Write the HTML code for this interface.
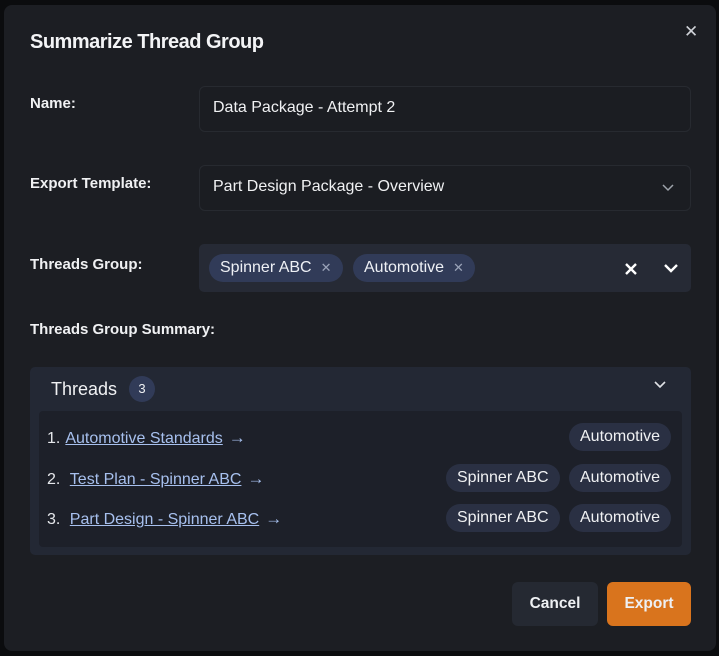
<!DOCTYPE html>
<html><head><style>
*{box-sizing:border-box;margin:0;padding:0}
body{width:719px;height:656px;background:#0b0c0e;font-family:"Liberation Sans",sans-serif;color:#eef0f3;position:relative;overflow:hidden}
.m{position:absolute;left:4px;top:5px;width:712px;height:646px;background:#1c1e23;border-radius:8px}
.a{position:absolute}
h1{position:absolute;left:26px;top:26px;font-size:20px;font-weight:bold;color:#f3f4f6;letter-spacing:-0.5px}
.lbl{position:absolute;left:26px;font-size:15px;font-weight:bold;color:#f0f1f3}
.inp{position:absolute;left:195px;width:492px;height:46px;border:1px solid #272a30;border-radius:6px;background:#1b1d22;font-size:16px;padding:12px 13px;color:#f0f1f3}
.tg{position:absolute;left:195px;top:239px;width:492px;height:48px;background:#262a35;border-radius:5px}
.chip{position:absolute;top:10px;height:28px;border-radius:14px;background:#313b58;font-size:16px;padding:5px 11px;color:#eef0f5}
.chip span{color:#9aa3b8;font-size:13px;margin-left:9px}
.pn{position:absolute;left:26px;top:362px;width:661px;height:188px;background:#232834;border-radius:5px}
.ls{position:absolute;left:9px;top:44px;width:643px;height:136px;background:#1d2029;border-radius:4px}
.row{position:absolute;left:8px;font-size:16px;color:#e6e8ec}
.row a{color:#a7c0ee;text-decoration:underline;margin-left:5px}
.row i{font-style:normal;color:#a7c0ee;margin-left:6px;font-size:17px}
.pill{position:absolute;height:28px;border-radius:14px;background:#2a3043;font-size:16px;padding:5px 11px;color:#f0f1f3}
</style></head><body>
<div class="m">
<h1>Summarize Thread Group</h1>
<div class="a" style="left:680px;top:17px;font-size:17px;color:#cfd2d7">✕</div>
<div class="lbl" style="top:90px">Name:</div>
<div class="inp" style="top:81px">Data Package - Attempt 2</div>
<div class="lbl" style="top:170px">Export Template:</div>
<div class="inp" style="top:160px">Part Design Package - Overview
<svg class="a" style="left:462px;top:18px" width="12" height="8"><path d="M1 1l5 5 5-5" stroke="#9ea3ab" stroke-width="1.5" fill="none"/></svg></div>
<div class="lbl" style="top:251px">Threads Group:</div>
<div class="tg">
<div class="chip" style="left:10px">Spinner ABC<span>✕</span></div>
<div class="chip" style="left:154px">Automotive<span>✕</span></div>
<svg class="a" style="left:426px;top:19px" width="12" height="12"><path d="M1 1l10 10M11 1L1 11" stroke="#fff" stroke-width="2.4"/></svg>
<svg class="a" style="left:465px;top:20px" width="14" height="10"><path d="M1 1l6 6 6-6" stroke="#fff" stroke-width="2.4" fill="none"/></svg>
</div>
<div class="lbl" style="top:316px">Threads Group Summary:</div>
<div class="pn">
<div class="a" style="left:21px;top:12px;font-size:18px;color:#f0f1f3">Threads</div>
<div class="a" style="left:99px;top:9px;width:26px;height:26px;border-radius:13px;background:#313b58;font-size:13px;text-align:center;line-height:26px">3</div>
<svg class="a" style="left:624px;top:14px" width="12" height="8"><path d="M1 1l5 5 5-5" stroke="#e0e2e6" stroke-width="1.6" fill="none"/></svg>
<div class="ls">
<div class="row" style="top:17px">1.<a>Automotive Standards</a><i>→</i></div>
<div class="row" style="top:58px">2. <a>Test Plan - Spinner ABC</a><i>→</i></div>
<div class="row" style="top:98px">3. <a>Part Design - Spinner ABC</a><i>→</i></div>
<div class="pill" style="left:530px;top:12px">Automotive</div>
<div class="pill" style="left:407px;top:53px">Spinner ABC</div>
<div class="pill" style="left:530px;top:53px">Automotive</div>
<div class="pill" style="left:407px;top:93px">Spinner ABC</div>
<div class="pill" style="left:530px;top:93px">Automotive</div>
</div></div>
<div class="a" style="left:508px;top:577px;width:86px;height:44px;background:#252932;border-radius:6px;font-size:15.5px;text-align:center;line-height:44px;font-weight:bold">Cancel</div>
<div class="a" style="left:603px;top:577px;width:84px;height:44px;background:#d9741d;border-radius:6px;font-size:15.5px;text-align:center;line-height:44px;font-weight:bold">Export</div>
</div>
</body></html>
